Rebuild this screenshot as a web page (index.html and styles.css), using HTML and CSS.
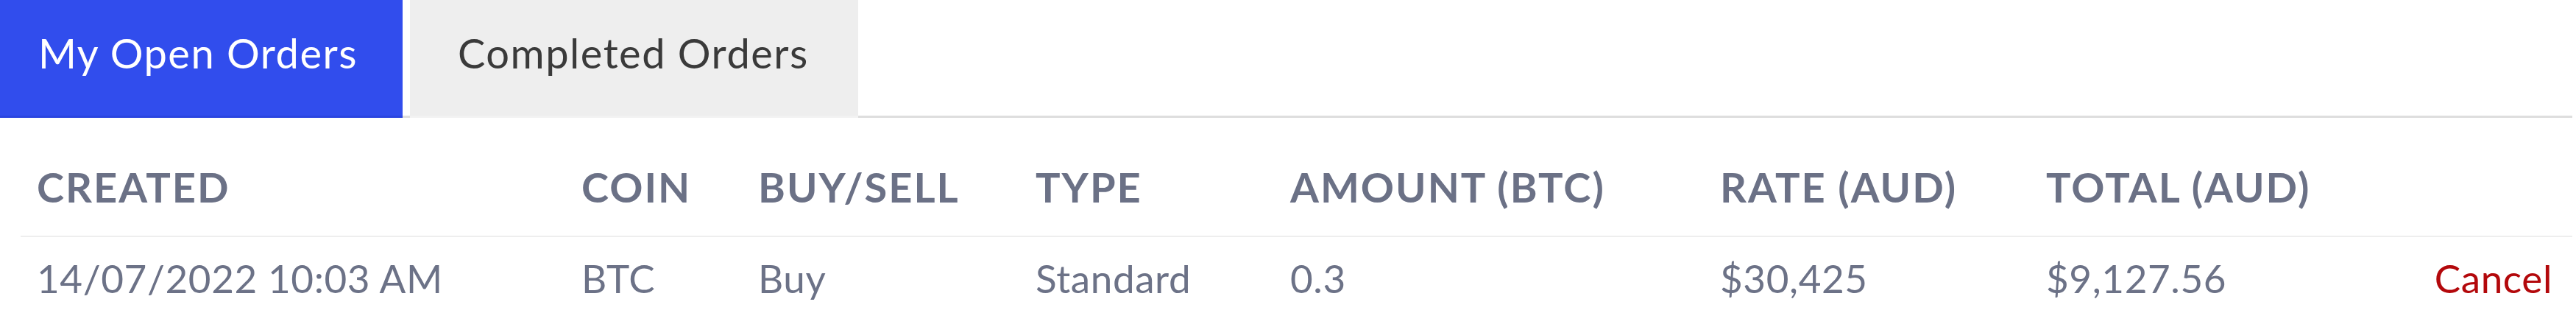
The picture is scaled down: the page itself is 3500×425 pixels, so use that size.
FILE: index.html
```html
<!DOCTYPE html>
<html lang="en">
<head>
<meta charset="utf-8">
<title>Orders</title>
<link rel="stylesheet" href="styles.css">
</head>
<body>
<div class="page">
  <nav class="tabs">
    <div class="tab tab-active">My Open Orders</div>
    <div class="tab tab-idle">Completed Orders</div>
  </nav>
  <div class="orders">
    <div class="row head">
      <div class="cell">CREATED</div>
      <div class="cell">COIN</div>
      <div class="cell">BUY/SELL</div>
      <div class="cell">TYPE</div>
      <div class="cell">AMOUNT (BTC)</div>
      <div class="cell">RATE (AUD)</div>
      <div class="cell">TOTAL (AUD)</div>
      <div class="cell"></div>
    </div>
    <div class="row body">
      <div class="cell">14/07/2022 10:03 AM</div>
      <div class="cell">BTC</div>
      <div class="cell">Buy</div>
      <div class="cell">Standard</div>
      <div class="cell">0.3</div>
      <div class="cell">$30,425</div>
      <div class="cell">$9,127.56</div>
      <div class="cell action"><a class="cancel" href="#">Cancel</a></div>
    </div>
  </div>
</div>
</body>
</html>
```

FILE: styles.css
```css
html, body {
  margin: 0;
  padding: 0;
  background: #ffffff;
}

.page {
  width: 3495px;
  font-family: "Lato", "Liberation Sans", sans-serif;
}

.tabs {
  display: flex;
  height: 157px;
  border-bottom: 3px solid #dedede;
}

.tab {
  box-sizing: border-box;
  height: 160px;
  margin-bottom: -3px;
  padding-top: 38px;
  font-size: 56px;
  letter-spacing: 1.5px;
  line-height: normal;
  white-space: nowrap;
}

.tab-active {
  width: 547px;
  padding-left: 52px;
  background: #314ded;
  color: #ffffff;
  border-bottom: 3px solid #2a45e0;
}

.tab-idle {
  width: 609px;
  margin-left: 10px;
  padding-left: 65px;
  background: #eeeeee;
  color: #3a3a3a;
  border-bottom: 3px solid #f2f2f2;
}

.orders {
  margin-left: 28px;
}

.row {
  display: grid;
  grid-template-columns: 740px 240px 377px 346px 584px 443px 400px 1fr;
}

.cell {
  padding-left: 22px;
  white-space: nowrap;
}

.head {
  padding-top: 60px;
  padding-bottom: 33px;
  border-bottom: 2px solid #eeeeee;
}

.head .cell {
  font-size: 56px;
  font-weight: 700;
  letter-spacing: 2px;
  color: #6b7186;
  line-height: normal;
}

.body {
  padding-top: 24px;
}

.body .cell {
  font-size: 53px;
  letter-spacing: 0.6px;
  color: #6c7287;
  line-height: normal;
}

.action {
  text-align: right;
  padding-right: 27px;
}

.cancel {
  color: #b3080b;
  text-decoration: none;
}
```
